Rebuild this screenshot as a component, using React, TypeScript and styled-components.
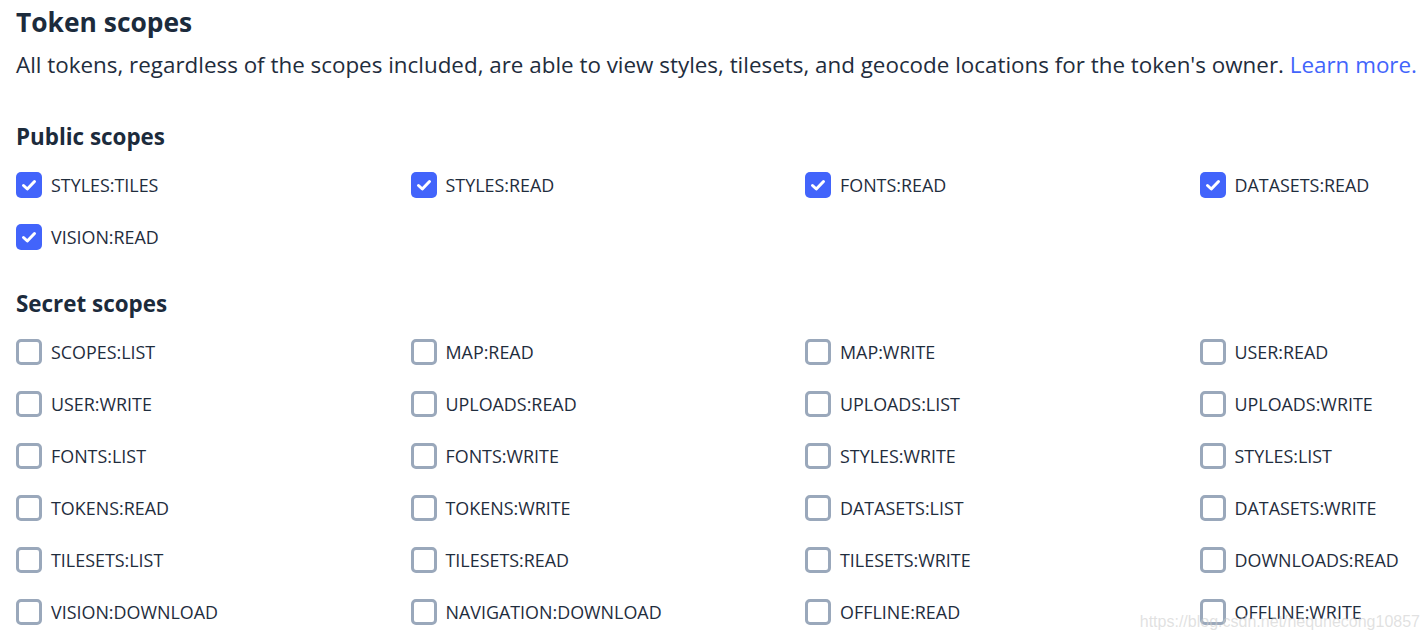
import * as React from 'react'
import styled, { createGlobalStyle } from 'styled-components'

const GlobalStyle = createGlobalStyle`
  body {
    margin: 0;
    background: #fff;
    font-family: "Open Sans", "Liberation Sans", sans-serif;
    color: #1f2d3d;
  }
`

const publicScopes = [
  'STYLES:TILES',
  'STYLES:READ',
  'FONTS:READ',
  'DATASETS:READ',
  'VISION:READ',
]

const secretScopes = [
  'SCOPES:LIST', 'MAP:READ', 'MAP:WRITE', 'USER:READ',
  'USER:WRITE', 'UPLOADS:READ', 'UPLOADS:LIST', 'UPLOADS:WRITE',
  'FONTS:LIST', 'FONTS:WRITE', 'STYLES:WRITE', 'STYLES:LIST',
  'TOKENS:READ', 'TOKENS:WRITE', 'DATASETS:LIST', 'DATASETS:WRITE',
  'TILESETS:LIST', 'TILESETS:READ', 'TILESETS:WRITE', 'DOWNLOADS:READ',
  'VISION:DOWNLOAD', 'NAVIGATION:DOWNLOAD', 'OFFLINE:READ', 'OFFLINE:WRITE',
]

const Scope: React.FC<{ label: string; checked?: boolean }> = ({ label, checked }) => (
  <Item>
    <Box checked={!!checked}>
      {checked && (
        <svg width="26" height="26" viewBox="0 0 26 26">
          <path
            d="M7.5 13.5 L11.3 17 L18.5 9.5"
            fill="none"
            stroke="#fff"
            strokeWidth="3"
            strokeLinecap="round"
            strokeLinejoin="round"
          />
        </svg>
      )}
    </Box>
    <Label>{label}</Label>
  </Item>
)

export default function App() {
  return (
    <Wrapper>
      <GlobalStyle />
      <Title>Token scopes</Title>
      <Description>
        All tokens, regardless of the scopes included, are able to view styles, tilesets, and
        geocode locations for the token's owner. <Link href="#">Learn more.</Link>
      </Description>

      <SectionTitle>Public scopes</SectionTitle>
      <Grid>
        {publicScopes.map((s) => (
          <Scope key={s} label={s} checked />
        ))}
      </Grid>

      <SectionTitle next>Secret scopes</SectionTitle>
      <Grid>
        {secretScopes.map((s) => (
          <Scope key={s} label={s} />
        ))}
      </Grid>
      <Watermark>https://blog.csdn.net/nequnecong10857</Watermark>
    </Wrapper>
  )
}

// Styles
const Wrapper = styled.div`
  position: relative;
  padding: 4px 0 0 16px;
  height: 639px;
  box-sizing: border-box;
  overflow: hidden;
`

const Title = styled.h2`
  font-size: 26.4px;
  font-weight: 700;
  line-height: 36px;
  margin: 0;
  color: #1c2b3c;
`

const Description = styled.p`
  font-size: 22.4px;
  line-height: 30px;
  margin: 10px 0 0 0;
  color: #1f2d3d;
  white-space: nowrap;
`

const Link = styled.a`
  color: #4264fb;
  text-decoration: none;
`

const SectionTitle = styled.h3<{ next?: boolean }>`
  font-size: 22.4px;
  font-weight: 700;
  line-height: 30px;
  margin: ${(p) => (p.next ? '26px' : '42px')} 0 0 0;
  color: #1c2b3c;
`

const Grid = styled.div`
  display: grid;
  grid-template-columns: repeat(4, 394.5px);
  grid-auto-rows: 52px;
  margin-top: 7px;
`

const Item = styled.label`
  display: flex;
  align-items: center;
  gap: 9px;
  cursor: pointer;
`

const Box = styled.span<{ checked: boolean }>`
  width: 26px;
  height: 26px;
  flex-shrink: 0;
  box-sizing: border-box;
  border-radius: 5px;
  display: flex;
  align-items: center;
  justify-content: center;
  background: ${(p) => (p.checked ? '#4264fb' : '#fff')};
  border: ${(p) => (p.checked ? 'none' : '3px solid #9aa8bb')};
`

const Label = styled.span`
  font-size: 17.9px;
  color: #1f2d3d;
`

const Watermark = styled.div`
  position: absolute;
  right: 8px;
  bottom: 8px;
  font-family: "Liberation Sans", Arial, sans-serif;
  font-size: 16px;
  color: rgba(205, 205, 205, 0.6);
`
